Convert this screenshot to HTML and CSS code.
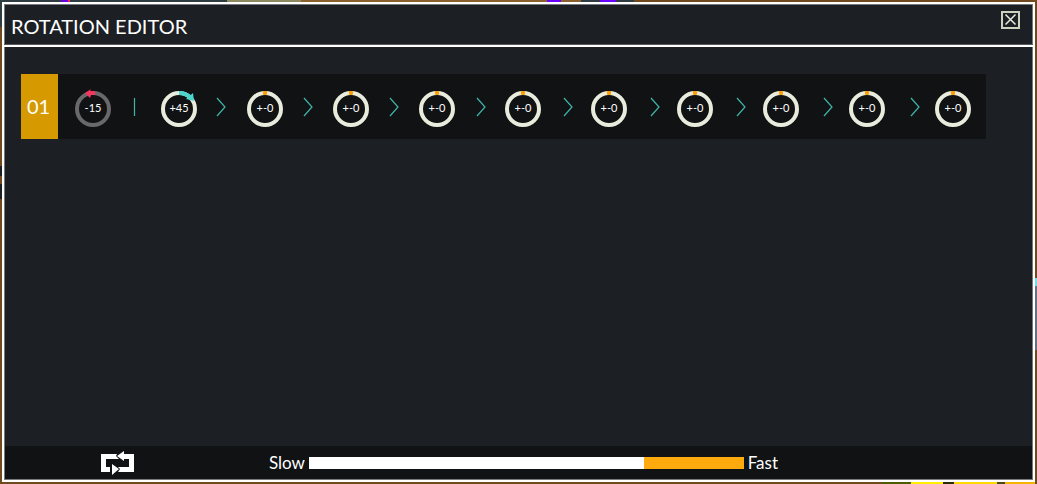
FILE: index.html
```html
<!DOCTYPE html>
<html lang="en">
<head>
  <meta charset="UTF-8">
  <meta name="viewport" content="width=device-width, initial-scale=1.0">
  <title>Rotation Editor</title>
  <link rel="stylesheet" href="styles.css">
</head>
<body>
  <main class="window">
    <header class="titlebar">
      <h1>ROTATION EDITOR</h1>
      <button class="close" type="button" aria-label="Close">
        <svg width="13" height="13" viewBox="0 0 13 13"><path d="M1.5 1.5 L11.5 11.5 M11.5 1.5 L1.5 11.5"/></svg>
      </button>
    </header>

    <section class="editor">
      <div class="track">
        <div class="track-number">01</div>
        <div class="steps" id="steps"></div>
        <div class="separators" id="separators"></div>
      </div>
    </section>

    <footer class="controls">
      <button class="loop" type="button" aria-label="Loop">
        <svg width="33" height="24" viewBox="0 0 33 24">
          <path d="M0 3 H16 L15 5 L18 8 H5 V16 H9 V21 H0 Z"/>
          <path d="M16 5 L23 0 V3 H33 V21 H17 L19 18 L17 16 H28 V8 H23 V10 Z"/>
          <path d="M11 13 L18 18 L11 24 Z"/>
        </svg>
      </button>
      <div class="speed">
        <label for="speed">Slow</label>
        <input type="range" id="speed" min="0" max="100" value="100">
        <label for="speed">Fast</label>
      </div>
    </footer>
  </main>

  <script>
    const steps = [-15, 45, 0, 0, 0, 0, 0, 0, 0, 0, 0];

    // marker at the top of the ring: arrow left, arrow right or a dot
    const markers = {
      left: '<path class="left" d="M20 1 H15 L16 -1 L10 3 L15 8 L16 5 H20 Z"/>',
      right: '<path class="right-arc" d="M18 3 A16 16 0 0 1 29 7"/><path class="right" d="M32 3 L33 11 L25 9 Z"/>',
      none: '<rect class="none" x="16" y="1" width="4" height="4" rx="1"/>'
    };

    document.getElementById('steps').innerHTML = steps.map(value => {
      const marker = value < 0 ? markers.left : value > 0 ? markers.right : markers.none;
      const text = value < 0 ? value : value > 0 ? '+' + value : '+-0';
      return `
        <button class="step ${value < 0 ? 'start' : ''}" type="button">
          <svg width="36" height="38" viewBox="0 0 36 38">
            <circle cx="18" cy="19" r="16"/>
            ${marker}
          </svg>
          <span>${text}</span>
        </button>`;
    }).join('');

    document.getElementById('separators').innerHTML = steps.slice(1).map((value, i) => `
      <svg width="10" height="20" viewBox="0 0 10 20">
        <path d="${i === 0 ? 'M5.5 1 V19' : 'M1 1 L9 10 L1 19'}"/>
      </svg>`).join('');
  </script>
</body>
</html>
```
FILE: styles.css
```css
:root {
  --panel: #1c1f24;
  --dark: #111214;
  --ivory: #e9ecdc;
  --amber: #ffab0d;
  --teal: #40b5a8;
  --wood: #70491f;
}

* {
  box-sizing: border-box;
  font-family: Lato, sans-serif;
  margin: 0;
  padding: 0;
}

body {
  display: flex;
  min-height: 100vh;
  padding: 2px;
  background-color: var(--wood);
  background-image:
    linear-gradient(90deg, #2f3d42 61px, #6a00e0 61px 68px, #f0305a 68px 70px, #2f3d42 70px 227px, #8d8a62 227px 301px, #8b602f 301px 547px, #6a00ff 547px 561px, #8b602f 561px 581px, #2f3d42 581px 600px, #6a00ff 600px 616px, #2f3d42 616px 634px, #70491f 634px),
    linear-gradient(90deg, #70491f 882px, #4d5c00 882px 911px, #fff000 911px 943px, #2c2c00 943px 954px, #ffd800 954px 997px, #4a4a10 997px 1005px, #f5b400 1005px 1035px, #70491f 1035px),
    linear-gradient(#2f3d42 27px, #70491f 27px 166px, #1c1f24 166px 176px, #70491f 176px 184px, #1c1f24 184px 199px, #70491f 199px),
    linear-gradient(#70491f 278px, #6fe0e6 278px 286px, #667080 286px 350px, #70491f 350px);
  background-repeat: no-repeat;
  background-position: top, bottom, left, right;
  background-size: 100% 2px, 100% 2px, 2px 100%, 2px 100%;
  color: white;
}

button {
  background: none;
  border: none;
  color: inherit;
  cursor: pointer;
}

svg {
  display: block;
  overflow: visible;
}

.window {
  display: flex;
  flex-direction: column;
  flex: 1;
  border: 2px solid white;
  background-color: var(--panel);
  box-shadow: inset 0 0 0 1px #77797c;
}

.titlebar {
  display: flex;
  align-items: center;
  justify-content: space-between;
  height: 43px;
  padding: 2px 13px 0 7px;
  border-bottom: 2px solid white;
  box-shadow: inset 0 -1px 0 #55585c;
}

.titlebar h1 {
  font-size: 20px;
  font-weight: 400;
  line-height: 26px;
}

.close {
  display: flex;
  align-items: center;
  justify-content: center;
  width: 19px;
  height: 18px;
  margin-bottom: 12px;
  border: 2px solid #cdd3bf;
}

.close path {
  stroke: var(--ivory);
  stroke-width: 1.5;
}

.editor {
  flex: 1;
  padding: 27px 47px 27px 17px;
}

/* steps and separators share the second column */
.track {
  display: grid;
  grid-template-columns: 37px 1fr;
  min-height: 65px;
  background-color: var(--dark);
}

.track-number {
  display: flex;
  align-items: center;
  justify-content: center;
  padding: 0 2px 2px 0;
  background-color: #d69a00;
  font-size: 20px;
}

.steps,
.separators {
  display: flex;
  grid-area: 1 / 2;
  align-items: center;
  justify-content: space-between;
}

.steps {
  padding: 4px 15px 0 17px;
}

.separators {
  padding: 0 66px 0 71px;
  pointer-events: none;
}

.separators path {
  fill: none;
  stroke: var(--teal);
  stroke-width: 1.2;
}

.step {
  display: grid;
  place-items: center;
}

.step svg,
.step span {
  grid-area: 1 / 1;
}

.step span {
  padding-bottom: 2px;
  font-size: 11px;
  line-height: 14px;
}

.step circle {
  fill: none;
  stroke: var(--ivory);
  stroke-width: 4;
}

.step.start circle {
  stroke: #69696c;
}

.step .left {
  fill: #f5365c;
}

.step .right {
  fill: #4bd5cc;
}

.step .right-arc {
  fill: none;
  stroke: #4bd5cc;
  stroke-width: 4;
}

.step .none {
  fill: #ff9e00;
}

.controls {
  display: flex;
  align-items: center;
  height: 33px;
  margin: 0 1px 1px;
  padding: 1px 254px 0 96px;
  background-color: var(--dark);
}

.loop path {
  fill: white;
}

.speed {
  display: flex;
  flex: 1;
  align-items: center;
  gap: 4px;
  margin-left: 135px;
}

.speed label {
  font-size: 17px;
  line-height: 20px;
}

.speed input {
  flex: 1;
  min-width: 0;
  height: 12px;
  appearance: none;
  background-color: white;
}

.speed input::-webkit-slider-thumb {
  appearance: none;
  width: 100px;
  height: 12px;
  background-color: var(--amber);
}

.speed input::-moz-range-thumb {
  width: 100px;
  height: 12px;
  border: none;
  border-radius: 0;
  background-color: var(--amber);
}
```
